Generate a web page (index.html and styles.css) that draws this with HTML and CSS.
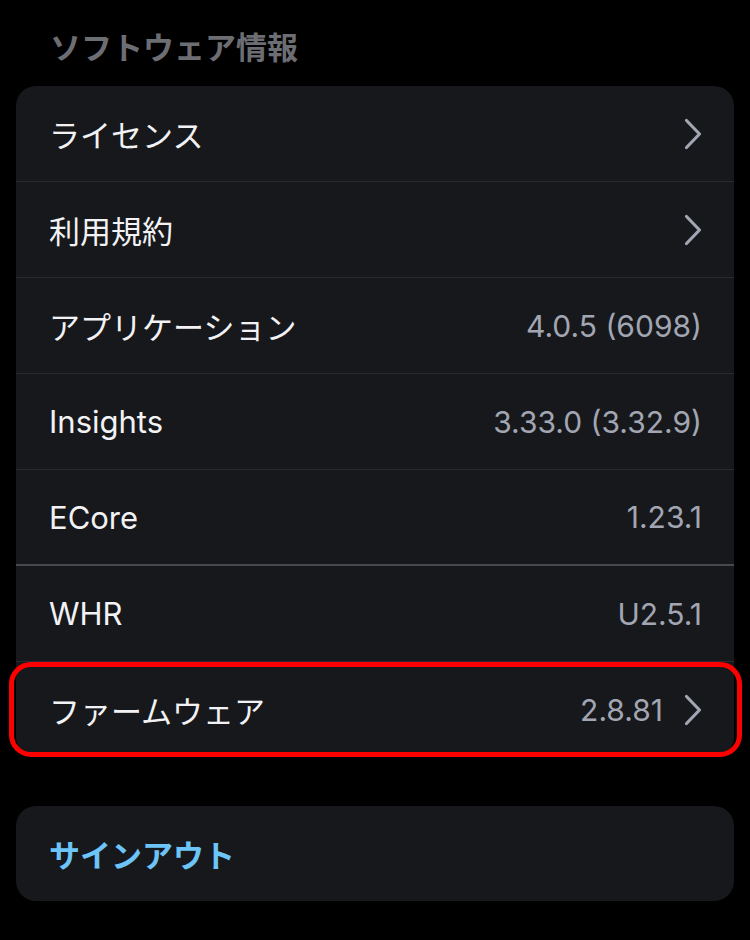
FILE: index.html
```html
<!DOCTYPE html>
<html lang="ja">
<head>
<meta charset="utf-8">
<link rel="stylesheet" href="styles.css">
</head>
<body>
<div class="page">
  <h2 class="section-title">ソフトウェア情報</h2>
  <div class="card">
    <div class="row">
      <span class="label">ライセンス</span>
      <svg class="chev" viewBox="0 0 18 32"><path d="M2.5 2.5 L15.5 16 L2.5 29.5"/></svg>
    </div>
    <div class="row">
      <span class="label">利用規約</span>
      <svg class="chev" viewBox="0 0 18 32"><path d="M2.5 2.5 L15.5 16 L2.5 29.5"/></svg>
    </div>
    <div class="row">
      <span class="label">アプリケーション</span>
      <span class="value">4.0.5 (6098)</span>
    </div>
    <div class="row">
      <span class="label">Insights</span>
      <span class="value">3.33.0 (3.32.9)</span>
    </div>
    <div class="row strong-sep">
      <span class="label">ECore</span>
      <span class="value">1.23.1</span>
    </div>
    <div class="row">
      <span class="label">WHR</span>
      <span class="value">U2.5.1</span>
    </div>
    <div class="row last highlighted">
      <span class="label">ファームウェア</span>
      <span class="value-group">
        <span class="value">2.8.81</span>
        <svg class="chev" viewBox="0 0 18 32"><path d="M2.5 2.5 L15.5 16 L2.5 29.5"/></svg>
      </span>
    </div>
  </div>
  <div class="card signout">
    <div class="row last">
      <span class="signout-label">サインアウト</span>
    </div>
  </div>
</div>
</body>
</html>
```

FILE: styles.css
```css
* { box-sizing: border-box; }
html, body {
  margin: 0;
  padding: 0;
  background: #000;
}
body {
  font-family: Inter, "Noto Sans CJK JP", sans-serif;
  color: #f2f2f4;
  width: 750px;
  height: 940px;
  overflow: hidden;
}
.page {
  padding: 28px 16px 0 16px;
}
.section-title {
  margin: 0 0 18px 0;
  padding-left: 34px;
  font-size: 31px;
  line-height: 40px;
  font-weight: 700;
  color: #6d6e73;
}
.card {
  background: #17181c;
  border-radius: 20px;
}
.row {
  position: relative;
  height: 96px;
  padding: 0 32px 0 33px;
  display: flex;
  align-items: center;
  justify-content: space-between;
  border-bottom: 1px solid #2a2b30;
}
.row.strong-sep {
  border-bottom: 2px solid #48494e;
}
.row.last {
  border-bottom: none;
  height: 95px;
}
.label {
  font-size: 31px;
  font-weight: 400;
  color: #f2f2f4;
}
.value {
  font-size: 30px;
  color: #a2a6b3;
}
.value-group {
  display: flex;
  align-items: center;
  gap: 21px;
}
.chev {
  width: 18px;
  height: 32px;
  display: block;
}
.chev path {
  fill: none;
  stroke: #a2a6b3;
  stroke-width: 3.2;
  stroke-linecap: round;
  stroke-linejoin: round;
}
.highlighted::after {
  content: "";
  position: absolute;
  left: -7px;
  right: -8px;
  top: 0;
  bottom: 0;
  border: 5px solid #ff0000;
  border-radius: 22px;
  pointer-events: none;
}
.signout {
  margin-top: 49px;
}
.signout-label {
  font-size: 31px;
  font-weight: 700;
  color: #6cc4f7;
}
```
